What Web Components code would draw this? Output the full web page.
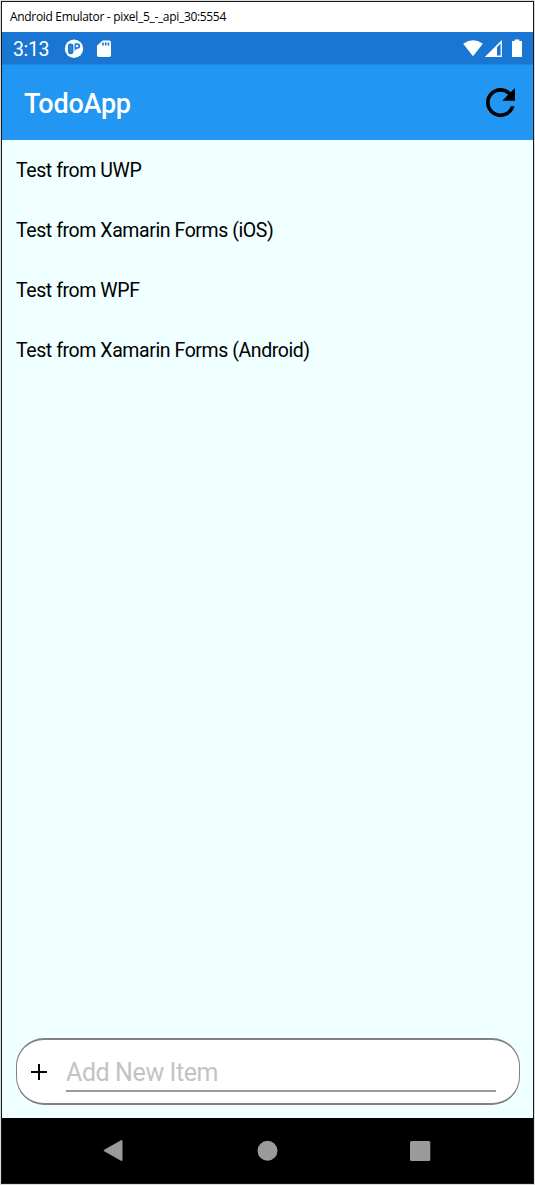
<!DOCTYPE html>
<html lang="en">
<head>
<meta charset="utf-8">
<title>Android Emulator</title>
<style>
body { margin: 0; background: #d9dbda; font-family: Roboto, "Liberation Sans", sans-serif; }
</style>
</head>
<body>
<emulator-window>
  <window-title slot="title">Android Emulator - pixel_5_-_api_30:5554</window-title>
  <status-bar>3:13</status-bar>
  <app-bar>TodoApp</app-bar>
  <todo-list>
    <todo-item>Test from UWP</todo-item>
    <todo-item>Test from Xamarin Forms (iOS)</todo-item>
    <todo-item>Test from WPF</todo-item>
    <todo-item>Test from Xamarin Forms (Android)</todo-item>
  </todo-list>
  <add-entry>Add New Item</add-entry>
  <nav-bar></nav-bar>
</emulator-window>
<script>
const define = (name, html) => customElements.define(name, class extends HTMLElement {
  constructor() {
    super();
    this.attachShadow({ mode: "open" }).innerHTML = html;
  }
});

define("emulator-window", `
<style>
:host { display: flex; flex-direction: column; box-sizing: border-box; width: 533px; height: 1183px; margin: 1px; border: 1px solid #16191b; background: #f0ffff; }
</style>
<slot name="title"></slot><slot></slot>`);

define("window-title", `
<style>
:host { display: flex; align-items: center; height: 30px; box-sizing: border-box; padding-left: 8px; background: #fff; color: #000; font: 12px/16px "Open Sans", "Noto Sans", sans-serif; letter-spacing: -0.32px; white-space: nowrap; }
</style>
<span><slot></slot></span>`);

define("status-bar", `
<style>
:host { display: flex; align-items: center; height: 32px; box-sizing: border-box; padding: 1px 9px 0 11px; background: #1976d2; color: #fff; font-size: 19.5px; line-height: 24px; }
.time { width: 51px; padding-top: 2px; letter-spacing: -.4px; }
svg { display: block; fill: #fff; }
.sd { margin-left: 12px; }
.right { margin-left: auto; }
</style>
<span class="time"><slot></slot></span>
<svg width="20" height="20" viewBox="0 0 20 20"><circle cx="10" cy="9.8" r="9.2"/><path d="M4 6.5Q4 4.4 6.6 4.4T9.4 6.5V13Q9.4 15.2 6.8 15.2T4 13Z" fill="#1976d2"/><path d="M5.6 6.4H7.6V13H5.6Z" fill="#3a8bdc"/><path d="M10.6 4.2H13.4A2.8 2.8 0 0 1 13.4 9.8Q11.4 10 10.6 12Z" fill="#1976d2"/><circle cx="13.1" cy="7" r="1.3"/></svg>
<svg class="sd" width="16" height="20" viewBox="0 0 16 20"><path d="M6.7 1.5H13.2Q15 1.5 15 3.2V16.3Q15 18 13.2 18H2.7Q1 18 1 16.3V6.7Z"/><path d="M6.2 3.5H7.8V6.5H6.2ZM8.9 3.5H10.5V6.5H8.9ZM11.6 3.5H13.2V6.5H11.6Z" fill="#1976d2"/></svg>
<svg class="right" width="62" height="20" viewBox="0 0 62 20"><path d="M1.2 4.7Q11 -2 20.8 4.7L11 17.3Z"/><path d="M22.8 18L39.9 1V18ZM35 8.2V16.5H38.6V4.5Z" fill-rule="evenodd"/><path d="M50 2.1H52.7V.5H57.3V2.1H60V18H50Z"/></svg>`);

define("app-bar", `
<style>
:host { display: flex; align-items: center; justify-content: space-between; height: 76px; box-sizing: border-box; padding: 0 18px 0 22px; background: #2196f3; color: #fff; border-top: 1px solid #1d86e2; font-size: 27px; font-weight: 500; line-height: 32px; letter-spacing: -.25px; }
span { padding-top: 3px; }
svg { display: block; }
</style>
<span><slot></slot></span>
<svg width="29" height="29" viewBox="4 4 16 16"><path d="M17.65 6.35A7.958 7.958 0 0 0 12 4c-4.42 0-7.99 3.58-7.99 8s3.57 8 7.99 8c3.73 0 6.84-2.55 7.73-6h-2.08A5.99 5.99 0 0 1 12 18c-3.31 0-6-2.69-6-6s2.69-6 6-6c1.66 0 3.14.69 4.22 1.78L13 11h7V4z"/></svg>`);

define("todo-list", `<style>:host { display: flex; flex-direction: column; flex: 1; background: #f0ffff; }</style><slot></slot>`);
define("todo-item", `
<style>
:host { display: flex; align-items: center; height: 60px; box-sizing: border-box; padding: 1px 0 0 14px; color: #000; font-size: 19.5px; line-height: 25px; letter-spacing: -.42px; white-space: nowrap; }
</style>
<span><slot></slot></span>`);

define("add-entry", `
<style>
:host { display: flex; align-items: center; box-sizing: border-box; height: 67px; margin: 0 13px 13px 14px; padding: 0 23px 0 13px; border: 1.5px solid #808080; border-width: 2px 1px 2px 1px; border-radius: 28px; background: #fff; }
svg { display: block; flex: none; }
.field { flex: 1; box-sizing: border-box; height: 38px; margin: 2px 0 0 18px; padding-top: 3px; border-bottom: 2px solid #9b9b9b; color: #c3c3c3; font-size: 25px; line-height: 32px; letter-spacing: -.4px; white-space: nowrap; }
</style>
<svg width="18" height="18" viewBox="0 0 18 18"><path d="M9 1V17M1 9H17" stroke="#000" stroke-width="2"/></svg>
<div class="field"><slot></slot></div>`);

define("nav-bar", `
<style>
:host { display: grid; grid-template-columns: repeat(3, 24px); column-gap: 129px; align-items: center; height: 65px; box-sizing: border-box; padding-left: 100px; background: #000; }
svg { display: block; fill: #9a9a9a; }
</style>
<svg width="24" height="24" viewBox="0 0 24 24"><path d="M2.7 11.5L19.5 2V21Z" stroke="#9a9a9a" stroke-width="2" stroke-linejoin="round"/></svg>
<svg width="24" height="24" viewBox="0 0 24 24"><circle cx="12.5" cy="11.7" r="10"/></svg>
<svg width="24" height="24" viewBox="0 0 24 24"><rect x="2" y="2" width="20.3" height="20" rx="1.5"/></svg>`);
</script>
</body>
</html>
